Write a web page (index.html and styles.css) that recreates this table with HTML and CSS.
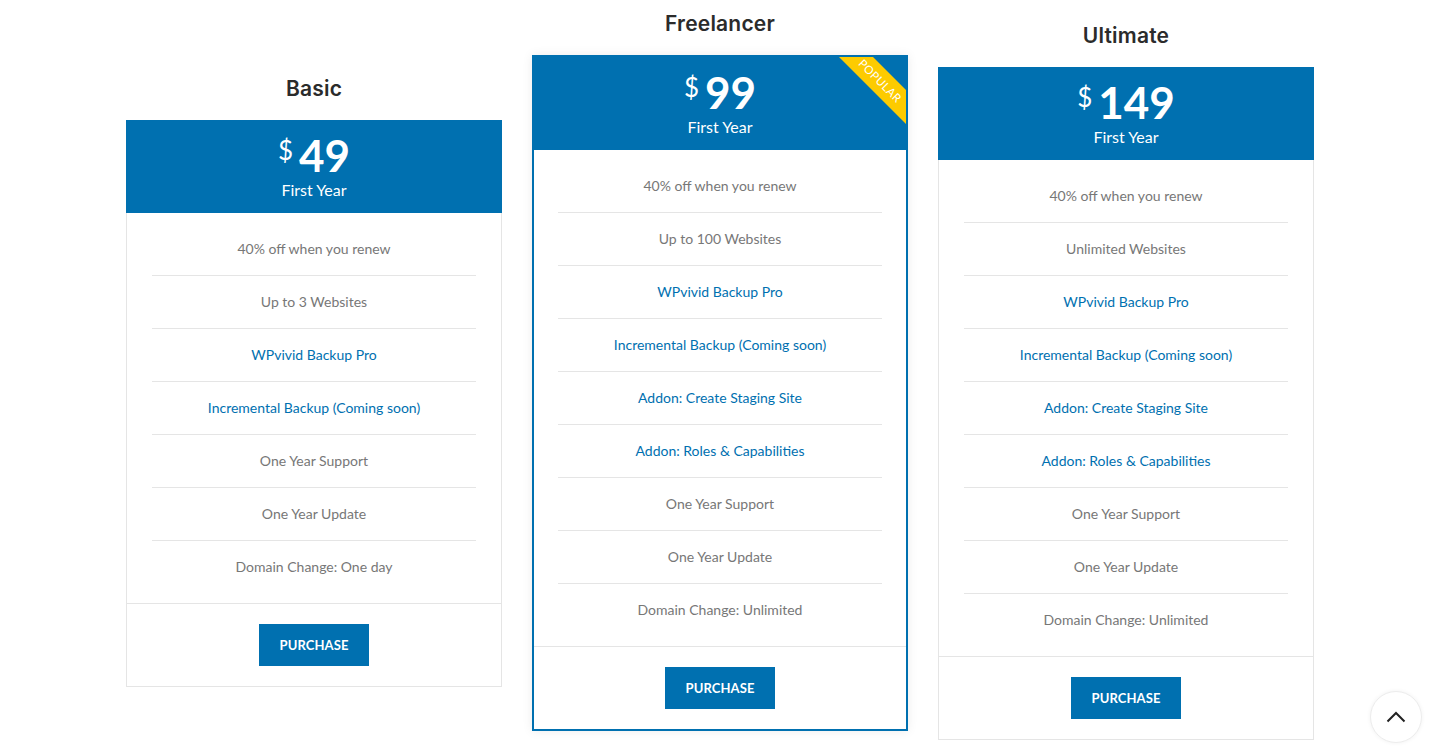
FILE: index.html
```html
<!DOCTYPE html>
<html lang="en">
<head>
<meta charset="utf-8">
<title>Pricing</title>
<link rel="stylesheet" href="styles.css">
</head>
<body>
<main class="pricing">
  <section class="plan plan-basic">
    <h2 class="plan-title">Basic</h2>
    <div class="card">
      <div class="card-head">
        <div class="price"><span class="cur">$</span>49</div>
        <div class="period">First Year</div>
      </div>
      <div class="card-body">
        <ul class="features">
          <li>40% off when you renew</li>
          <li>Up to 3 Websites</li>
          <li class="link">WPvivid Backup Pro</li>
          <li class="link">Incremental Backup (Coming soon)</li>
          <li>One Year Support</li>
          <li>One Year Update</li>
          <li>Domain Change: One day</li>
        </ul>
        <div class="card-foot"><a class="btn" href="#">PURCHASE</a></div>
      </div>
    </div>
  </section>

  <section class="plan plan-freelancer">
    <h2 class="plan-title">Freelancer</h2>
    <div class="card popular">
      <div class="ribbon"><span>POPULAR</span></div>
      <div class="card-head">
        <div class="price"><span class="cur">$</span>99</div>
        <div class="period">First Year</div>
      </div>
      <div class="card-body">
        <ul class="features">
          <li>40% off when you renew</li>
          <li>Up to 100 Websites</li>
          <li class="link">WPvivid Backup Pro</li>
          <li class="link">Incremental Backup (Coming soon)</li>
          <li class="link">Addon: Create Staging Site</li>
          <li class="link">Addon: Roles &amp; Capabilities</li>
          <li>One Year Support</li>
          <li>One Year Update</li>
          <li>Domain Change: Unlimited</li>
        </ul>
        <div class="card-foot"><a class="btn" href="#">PURCHASE</a></div>
      </div>
    </div>
  </section>

  <section class="plan plan-ultimate">
    <h2 class="plan-title">Ultimate</h2>
    <div class="card">
      <div class="card-head">
        <div class="price"><span class="cur">$</span>149</div>
        <div class="period">First Year</div>
      </div>
      <div class="card-body">
        <ul class="features">
          <li>40% off when you renew</li>
          <li>Unlimited Websites</li>
          <li class="link">WPvivid Backup Pro</li>
          <li class="link">Incremental Backup (Coming soon)</li>
          <li class="link">Addon: Create Staging Site</li>
          <li class="link">Addon: Roles &amp; Capabilities</li>
          <li>One Year Support</li>
          <li>One Year Update</li>
          <li>Domain Change: Unlimited</li>
        </ul>
        <div class="card-foot"><a class="btn" href="#">PURCHASE</a></div>
      </div>
    </div>
  </section>
</main>

<a class="to-top" href="#" aria-label="Back to top">
  <svg width="20" height="12" viewBox="0 0 20 12"><path d="M1.5 10.5 L10 2 L18.5 10.5" fill="none" stroke="#222" stroke-width="2"/></svg>
</a>
</body>
</html>
```

FILE: styles.css
```css
* { box-sizing: border-box; }

html, body {
  margin: 0;
  padding: 0;
  background: #fff;
}

body {
  font-family: Lato, "Liberation Sans", sans-serif;
  height: 753px;
  overflow: hidden;
}

.pricing {
  width: 1188px;
  margin: 0 auto;
  display: flex;
  align-items: flex-start;
  gap: 30px;
}

.plan {
  width: 376px;
  flex: 0 0 376px;
}

.plan-basic { margin-top: 74px; }
.plan-freelancer { margin-top: 9px; }
.plan-ultimate { margin-top: 21px; }

.plan-title {
  margin: 0 0 16px;
  font-family: Inter, "Noto Sans", sans-serif;
  font-weight: 600;
  font-size: 21px;
  line-height: 30px;
  letter-spacing: 0.2px;
  color: #2b2b2b;
  text-align: center;
}

.card {
  position: relative;
  background: #fff;
}

.card-head {
  background: #0070b0;
  color: #fff;
  text-align: center;
  padding: 13px 0 13px;
}

.price {
  height: 44px;
  font-size: 44px;
  line-height: 44px;
  font-weight: 700;
}

.cur {
  font-size: 26px;
  line-height: 0;
  font-weight: 400;
  vertical-align: 12px;
  margin-right: 6px;
}

.period {
  margin-top: 3px;
  font-size: 16px;
  line-height: 20px;
}

.card-body {
  border: 1px solid #e5e5e5;
  border-top: 0;
}

.features {
  list-style: none;
  margin: 0;
  padding: 10px 25px;
}

.features li {
  font-size: 14px;
  line-height: 20px;
  padding: 16px 0;
  color: #777;
  text-align: center;
  border-bottom: 1px solid #e5e5e5;
}

.features li:last-child { border-bottom: 0; }

.features li.link { color: #0070b0; }

.card-foot {
  border-top: 1px solid #e5e5e5;
  padding: 20px 0;
  text-align: center;
}

.btn {
  display: inline-block;
  height: 42px;
  line-height: 42px;
  padding: 0 21px;
  background: #0070b0;
  color: #fff;
  font-size: 13px;
  font-weight: 700;
  text-decoration: none;
  letter-spacing: 0.1px;
}

.card.popular {
  border: 2px solid #0070b0;
  box-shadow: 0 0 10px rgba(0, 0, 0, 0.08);
  overflow: hidden;
}

.card.popular .card-body { border: 0; }
.card.popular .features { padding: 10px 24px; }

.ribbon {
  position: absolute;
  top: 0;
  right: 0;
  width: 72px;
  height: 72px;
  overflow: hidden;
}

.ribbon span {
  position: absolute;
  left: -9px;
  top: 12px;
  width: 110px;
  height: 24px;
  line-height: 24px;
  background: #fdcb00;
  color: #fff;
  font-size: 11.5px;
  font-weight: 400;
  text-align: center;
  letter-spacing: 0.4px;
  transform: rotate(45deg);
}

.to-top {
  position: fixed;
  right: 18px;
  bottom: 10px;
  width: 52px;
  height: 52px;
  border-radius: 50%;
  background: #fff;
  border: 1px solid #ececec;
  box-shadow: 0 0 4px rgba(0, 0, 0, 0.06);
  display: flex;
  align-items: center;
  justify-content: center;
}
```
